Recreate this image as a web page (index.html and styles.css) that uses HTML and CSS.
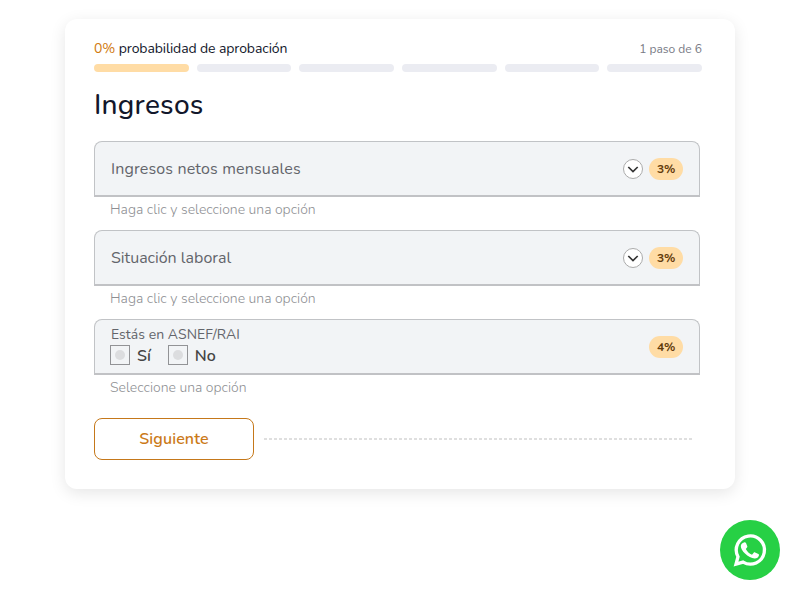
FILE: index.html
```
<!DOCTYPE html>
<html lang="es">
  <head>
    <meta charset="UTF-8" />
    <meta name="viewport" content="width=device-width, initial-scale=1.0" />
    <title>Ingresos</title>
    <link rel="stylesheet" href="styles.css">
  </head>
  <body>
    <main class="card">
      <div class="progress-head">
        <div class="probability"><span>0%</span> probabilidad de aprobación</div>
        <div class="step-count">1 paso de 6</div>
      </div>
      <div class="progress">
        <span class="step active"></span>
        <span class="step"></span>
        <span class="step"></span>
        <span class="step"></span>
        <span class="step"></span>
        <span class="step"></span>
      </div>

      <h1>Ingresos</h1>

      <form>
        <div class="field">
          <div class="label">Ingresos netos mensuales</div>
          <svg class="arrow" viewBox="0 0 20 20">
            <circle cx="10" cy="10" r="9.5" />
            <path d="M5.3 8l4.7 4.5L14.7 8" />
          </svg>
          <span class="badge">3%</span>
        </div>
        <p class="hint">Haga clic y seleccione una opción</p>

        <div class="field">
          <div class="label work">Situación laboral</div>
          <svg class="arrow" viewBox="0 0 20 20">
            <circle cx="10" cy="10" r="9.5" />
            <path d="M5.3 8l4.7 4.5L14.7 8" />
          </svg>
          <span class="badge">3%</span>
        </div>
        <p class="hint">Haga clic y seleccione una opción</p>

        <div class="field">
          <div class="choice">
            <div class="choice-title">Estás en ASNEF/RAI</div>
            <div class="options">
              <label class="option"><span class="box"></span><span class="option-text">Sí</span></label>
              <label class="option"><span class="box"></span><span class="option-text">No</span></label>
            </div>
          </div>
          <span class="badge">4%</span>
        </div>
        <p class="hint">Seleccione una opción</p>

        <div class="actions">
          <button type="button" class="next-btn">Siguiente</button>
          <span class="dashes"></span>
        </div>
      </form>
    </main>

    <a class="whatsapp" href="#" aria-label="WhatsApp">
      <svg viewBox="0 0 60 60">
        <path class="bubble" d="M16 44.2l2-7.4A14.1 14.1 0 1 1 23.1 42.1z" />
        <path class="phone" d="M24 22.5c.7-.4 1.6-.2 2 .6l1.3 3.1c.2.5 0 .9-.3 1.3l-1.2 1.5c1.4 2.7 3.4 4.5 6.2 5.7l1.7-2c.4-.5.8-.5 1.4-.3l3.3 1.6c.5.3.7.6.6 1.2-.3 2.1-2.4 3.4-4.4 3.3-2.8-.1-6.8-2-9.6-4.9-2.5-2.5-4.3-5.2-4.2-7.6.1-1.6 1.5-3 3.2-3.5z" />
      </svg>
    </a>
  </body>
</html>
```

FILE: styles.css
```
* {
  box-sizing: border-box;
}

body {
  margin: 0;
  height: 600px;
  overflow: hidden;
  background: #fff;
  color: #12172b;
  font-family: Nunito, "Noto Sans", sans-serif;
}

.card {
  width: 670px;
  height: 470px;
  margin: 19px auto 0;
  padding: 19px 33px 29px 29px;
  border-radius: 12px;
  background: #fff;
  box-shadow: 0 4px 16px rgba(0, 0, 0, 0.1);
}

.progress-head {
  display: flex;
  justify-content: space-between;
  align-items: center;
  height: 20px;
  white-space: nowrap;
}

.probability {
  font-size: 14px;
  letter-spacing: -0.1px;
}

.probability span {
  color: #d17b0f;
}

.step-count {
  padding-top: 1px;
  color: #777984;
  font-size: 12px;
}

.progress {
  display: grid;
  grid-template-columns: repeat(6, 1fr);
  gap: 8px;
  margin-top: 6px;
}

.step {
  height: 8px;
  border-radius: 4px;
  background: #ebecf2;
}

.step.active {
  background: #ffdca5;
}

h1 {
  margin: 13px 0 16px;
  font-size: 28px;
  font-weight: 500;
  line-height: 40px;
  letter-spacing: 0.25px;
}

.field {
  display: flex;
  align-items: center;
  width: 606px;
  height: 56px;
  padding: 0 16px;
  border: 1px solid #c1c3c6;
  border-bottom: 2px solid #c1c2c5;
  border-radius: 8px 8px 0 0;
  background: #f2f4f6;
}

.label {
  flex: 1;
  color: #63656b;
  font-size: 16px;
  letter-spacing: 0.15px;
}

.label.work {
  letter-spacing: 0;
}

.arrow {
  width: 20px;
  height: 20px;
  margin-right: 6px;
}

.arrow circle {
  fill: #fff;
  stroke: #aaa;
}

.arrow path {
  fill: none;
  stroke: #333;
  stroke-width: 1.7;
}

.badge {
  width: 34px;
  height: 22px;
  border-radius: 11px;
  background: #ffdca5;
  color: #633b0b;
  font-size: 12px;
  font-weight: 700;
  line-height: 22px;
  text-align: center;
  letter-spacing: -0.2px;
}

.hint {
  height: 33px;
  margin: 0;
  padding: 3px 16px;
  color: #8e8f93;
  font-size: 14px;
  font-weight: 300;
  line-height: 20px;
}

.choice {
  flex: 1;
  align-self: stretch;
}

.choice-title {
  height: 25px;
  padding-top: 6px;
  color: #63656b;
  font-size: 14px;
  line-height: 18px;
  letter-spacing: 0.05px;
}

.options {
  display: flex;
  gap: 17px;
  margin-left: -1px;
}

.option {
  display: flex;
  align-items: center;
  gap: 7px;
  height: 20px;
  color: #444;
  font-size: 16px;
  font-weight: 600;
}

.option-text {
  padding-top: 2px;
}

.box {
  display: grid;
  place-items: center;
  width: 20px;
  height: 20px;
  border: 1px solid #929396;
}

.box::after {
  content: "";
  width: 10px;
  height: 10px;
  border-radius: 50%;
  background: #dcdddf;
}

.actions {
  display: flex;
  align-items: center;
  gap: 10px;
  margin-top: 10px;
}

.next-btn {
  width: 160px;
  height: 42px;
  padding: 0;
  border: 1px solid #c5781a;
  border-radius: 8px;
  background: #fff;
  color: #cb7a19;
  font: 600 16px Nunito, "Noto Sans", sans-serif;
  letter-spacing: 0.1px;
}

.dashes {
  width: 428px;
  height: 2px;
  background: repeating-linear-gradient(90deg, #dfdfdf 0 3px, #fff 3px 5px);
}

.whatsapp {
  position: fixed;
  right: 20px;
  bottom: 20px;
  width: 60px;
  height: 60px;
  border-radius: 50%;
  background: #27d045;
}

.whatsapp svg {
  display: block;
}

.bubble {
  fill: none;
  stroke: #fff;
  stroke-width: 3.3;
}

.phone {
  fill: #fff;
}
```
